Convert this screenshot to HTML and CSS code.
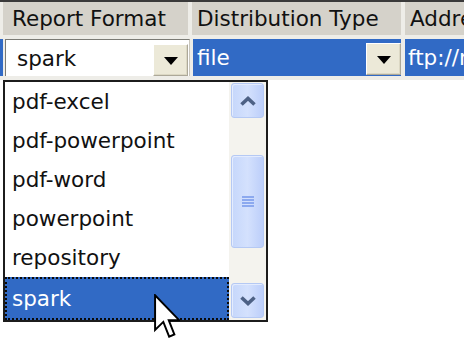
FILE: index.html
```html
<!DOCTYPE html>
<html lang="en">
<head>
  <meta charset="UTF-8" />
  <title>Report schedule</title>
  <link rel="stylesheet" href="styles.css">
</head>
<body>
  <div class="grid">
    <div class="head">
      <div class="hcell first">Report Format</div>
      <div class="hcell second">Distribution Type</div>
      <div class="hcell third">Address</div>
    </div>
    <div class="row">
      <div class="sliver"></div>
      <div class="cell c1">
        <div class="select">
          <span class="value">spark</span>
          <span class="btn"><i class="arrow"></i></span>
        </div>
      </div>
      <div class="cell c2 active">
        <span class="value">file</span>
        <span class="btn"><i class="arrow"></i></span>
      </div>
      <div class="cell c3 active">
        <span class="value">ftp://reports</span>
      </div>
    </div>
  </div>

  <!-- open dropdown of the Report Format select -->
  <div class="list">
    <div class="items">
      <div class="item">pdf-excel</div>
      <div class="item">pdf-powerpoint</div>
      <div class="item">pdf-word</div>
      <div class="item">powerpoint</div>
      <div class="item">repository</div>
      <div class="item selected">spark</div>
    </div>
    <div class="scroll">
      <div class="sbtn up">
        <svg width="18" height="12" viewBox="0 0 18 12"><polyline points="2.5,9.5 9,3.5 15.5,9.5" fill="none" stroke="#4d6185" stroke-width="3.6"/></svg>
      </div>
      <div class="track"></div>
      <div class="thumb">
        <span class="grip"></span>
      </div>
      <div class="track rest"></div>
      <div class="sbtn down">
        <svg width="18" height="12" viewBox="0 0 18 12"><polyline points="2.5,2.5 9,8.5 15.5,2.5" fill="none" stroke="#4d6185" stroke-width="3.6"/></svg>
      </div>
    </div>
  </div>

  <svg class="cursor" width="26" height="48" viewBox="0 0 12 22">
    <polygon points="0.5,0.5 0.5,16.5 4.3,12.8 7,19.6 9.4,18.6 6.8,12 11.6,12" fill="#fff" stroke="#000" stroke-width="0.9" stroke-linejoin="miter"/>
  </svg>
</body>
</html>
```
FILE: styles.css
```css
* {
  box-sizing: border-box;
}
body {
  margin: 0;
  width: 464px;
  height: 350px;
  overflow: hidden;
  background: #fff;
  font-family: 'DejaVu Sans', sans-serif;
  font-size: 21.5px;
  color: #111;
  position: relative;
}
.grid {
  border-top: 2px solid #3a3a3a;
  background: #eeede8;
  padding-bottom: 3px;
}
.head {
  display: flex;
  padding-left: 3px;
  padding-bottom: 3px;
}
.hcell {
  background: #d5d2ca;
  height: 33px;
  line-height: 33px;
  padding-left: 5px;
  white-space: nowrap;
  overflow: hidden;
}
.hcell.first {
  width: 185px;
  padding-left: 9px;
}
.hcell.second {
  width: 209px;
  margin-left: 4px;
}
.hcell.third {
  flex: 1;
  margin-left: 4px;
}
.row {
  display: flex;
  height: 39px;
  padding: 1px 0;
}
.sliver {
  width: 3px;
  background: #316ac5;
}
.cell {
  position: relative;
  display: flex;
  align-items: center;
  white-space: nowrap;
  overflow: hidden;
}
.c1 {
  width: 185px;
  margin-left: 2px;
}
.c2 {
  width: 208px;
  margin-left: 3px;
  padding-left: 4px;
}
.c3 {
  flex: 1;
  margin-left: 4px;
  padding-left: 3px;
}
.active {
  background: #316ac5;
  color: #fff;
}
.select {
  width: 100%;
  height: 38px;
  margin-top: 1px;
  background: #fff;
  border: 1px solid #7b7b75;
  border-right-color: #c9c6bc;
  border-bottom-color: #c9c6bc;
  display: flex;
  align-items: center;
  padding-left: 11px;
}
.value {
  flex: 1;
}
.btn {
  width: 35px;
  height: 32px;
  margin-right: 1px;
  margin-top: 3px;
  background: #ece9d8;
  border: 1px solid #fff;
  border-right-color: #aca899;
  border-bottom-color: #aca899;
  box-shadow: inset -1px -1px 0 #dcd8c4;
  display: flex;
  align-items: center;
  justify-content: center;
  flex: none;
}
.c2 .btn {
  margin-right: 0;
}
.arrow {
  width: 0;
  height: 0;
  border-left: 7px solid transparent;
  border-right: 7px solid transparent;
  border-top: 8px solid #000;
  margin-top: 2px;
}
.list {
  margin-left: 3px;
  width: 265px;
  height: 242px;
  border: 2px solid #1c1c1c;
  display: flex;
  background: #fff;
}
.items {
  flex: 1;
  display: flex;
  flex-direction: column;
}
.item {
  flex: 1;
  display: flex;
  align-items: center;
  padding-left: 7px;
  white-space: nowrap;
}
.item.selected {
  background: #316ac5;
  color: #fff;
  border: 2px dotted #0b0b0b;
  padding-left: 5px;
}
.scroll {
  width: 37px;
  background: #f4f3ee;
  display: flex;
  flex-direction: column;
  padding: 1px 2px 2px 2px;
}
.sbtn, .thumb {
  border: 1px solid #b5c9f4;
  border-radius: 3px;
  background: linear-gradient(90deg, #c6d7fb, #d4e1fd 50%, #bccefa);
  box-shadow: inset 1px 1px 0 #e4ecfe;
  display: flex;
  align-items: center;
  justify-content: center;
}
.sbtn {
  height: 35px;
}
.track {
  height: 37px;
}
.track.rest {
  height: 35px;
}
.thumb {
  height: 93px;
}
.grip {
  width: 12px;
  height: 11px;
  background: repeating-linear-gradient(#8ca9ef 0 2px, transparent 2px 3px);
}
.cursor {
  position: absolute;
  left: 154px;
  top: 294px;
}
```
